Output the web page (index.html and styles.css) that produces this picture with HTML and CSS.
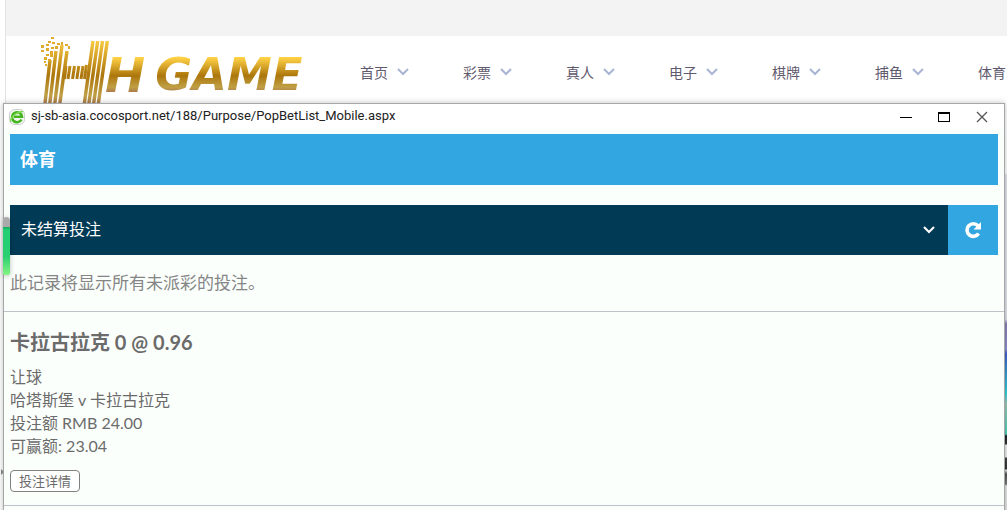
FILE: index.html
```html
<!DOCTYPE html>
<html lang="zh-CN">
<head>
    <meta charset="UTF-8">
    <title>HH GAME</title>
    <link rel="stylesheet" href="styles.css">
</head>
<body>
    <div class="site">
        <div class="topbar"></div>
        <header class="header">
            <a class="logo" href="#">
                <svg class="logo-mark" width="70" height="72" viewBox="0 0 70 72">
                    <defs>
                        <linearGradient id="gold" gradientUnits="userSpaceOnUse" x1="0" y1="2" x2="0" y2="70">
                            <stop offset="0" stop-color="#ffd145"/>
                            <stop offset="0.55" stop-color="#ac760c"/>
                            <stop offset="0.85" stop-color="#c0a045"/>
                            <stop offset="1" stop-color="#a8704e"/>
                        </linearGradient>
                    </defs>
                    <g stroke="url(#gold)" stroke-width="3.400" fill="none">
                        <path d="M10 24L4.700 70M16 15L9.500 70M22 9L14.500 70M27 15L19.500 70"/>
                        <path d="M53 5L44 70M57.700 5L48.500 70M62.500 5L53.300 70M67.300 5L58 70"/>
                    </g>
                    <g stroke="url(#gold)" stroke-width="3" fill="none">
                        <path d="M26 30L24.500 43M30 30L28 43M34.500 30L32.500 43M38.800 30L36.800 43M43 30L41 43M46.500 29L44.500 43"/>
                    </g>
                    <g fill="#e0aa2c">
                        <path d="M11 1h3v2h-3zM8 5h3v2h-3zM1 9h3v3H1zM6 8h3v2H6zM12 6h3v2h-3zM17 7h3v2h-3zM6 12h3v3H6zM11 11h3v2h-3zM1 14h3v2H1zM15 10h3v3h-3zM21 6h2v3h-2zM25 8h3v2h-3zM28 10h2v3h-2zM10 15h3v3h-3zM6 18h3v2H6zM10 18h3v3h-3zM4 21h3v3H4zM8 23h3v2H8zM4 25h2v2H4zM5 28h2v2H5z"/>
                    </g>
                </svg>
                <span class="logo-h">H</span>
                <span class="logo-game">GAME</span>
            </a>
            <nav class="nav">
                <a href="#">首页 <svg class="arrow" viewBox="0 0 12 8"><path d="M1 1l5 5 5-5"/></svg></a>
                <a href="#">彩票 <svg class="arrow" viewBox="0 0 12 8"><path d="M1 1l5 5 5-5"/></svg></a>
                <a href="#">真人 <svg class="arrow" viewBox="0 0 12 8"><path d="M1 1l5 5 5-5"/></svg></a>
                <a href="#">电子 <svg class="arrow" viewBox="0 0 12 8"><path d="M1 1l5 5 5-5"/></svg></a>
                <a href="#">棋牌 <svg class="arrow" viewBox="0 0 12 8"><path d="M1 1l5 5 5-5"/></svg></a>
                <a href="#">捕鱼 <svg class="arrow" viewBox="0 0 12 8"><path d="M1 1l5 5 5-5"/></svg></a>
                <a href="#">体育 <svg class="arrow" viewBox="0 0 12 8"><path d="M1 1l5 5 5-5"/></svg></a>
            </nav>
        </header>
    </div>
    <div class="side-banner"></div>
    <div class="side-arrow"></div>

    <!-- popup window -->
    <div class="window">
        <div class="titlebar">
            <svg class="browser-icon" width="16" height="16" viewBox="0 0 16 16">
                <rect x="0.500" y="0.500" width="15" height="15" rx="5" fill="#f4f6f4" stroke="#c9cfc9"/>
                <path d="M12.500 10.500A5 5 0 1 1 13 7.800H5" fill="none" stroke="#45b51f" stroke-width="2.600"/>
                <path d="M2 13C0 9 8 2.500 14 2.500" fill="none" stroke="#7ed957" stroke-width="1.300"/>
            </svg>
            <span class="url">sj-sb-asia.cocosport.net/188/Purpose/PopBetList_Mobile.aspx</span>
            <div class="window-buttons">
                <button type="button" aria-label="Minimize"><svg width="12" height="12" viewBox="0 0 12 12"><path d="M0 6.500h12" stroke="#000"/></svg></button>
                <button type="button" aria-label="Maximize"><svg width="12" height="12" viewBox="0 0 12 12"><path d="M0 1h12v10H0z" fill="#000"/><path d="M1 3h10v7H1z" fill="#fff"/></svg></button>
                <button type="button" aria-label="Close"><svg width="12" height="12" viewBox="0 0 12 12"><path d="M1 1l10 10M11 1L1 11" stroke="#555" stroke-width="1.300"/></svg></button>
            </div>
        </div>
        <main class="page">
            <h1 class="page-title">体育</h1>
            <div class="filter">
                <div class="select-box">
                    <select aria-label="投注状态">
                        <option>未结算投注</option>
                    </select>
                    <svg class="select-arrow" width="12" height="8" viewBox="0 0 12 8"><path d="M1 1l5 5 5-5"/></svg>
                </div>
                <button type="button" class="refresh" aria-label="刷新">
                    <svg width="18" height="18" viewBox="0 0 18 18">
                        <path d="M14.600 12.500A6.300 6.300 0 1 1 14 4.800" fill="none" stroke="#fff" stroke-width="3.600"/>
                        <path d="M17 1v7.500H9.500z" fill="#fff"/>
                    </svg>
                </button>
            </div>
            <p class="note">此记录将显示所有未派彩的投注。</p>
            <section class="bet">
                <h2>卡拉古拉克 0 @ 0.96</h2>
                <p>让球</p>
                <p>哈塔斯堡 v 卡拉古拉克</p>
                <p>投注额 RMB 24.00</p>
                <p>可赢额: 23.04</p>
                <button type="button" class="detail-btn">投注详情</button>
            </section>
        </main>
    </div>
    <div class="float-meter"></div>
</body>
</html>
```

FILE: styles.css
```css
* {
    box-sizing: border-box;
}
body {
    margin: 0;
    height: 100vh;
    position: relative;
    overflow: hidden;
    background: #fff;
    font-family: Lato, "Noto Sans CJK SC", sans-serif;
}
h1, h2, p {
    margin: 0;
}
button {
    padding: 0;
    border: none;
    font-family: inherit;
    cursor: pointer;
}

/* site behind the popup */
.site {
    margin-left: 5px;
    height: 100%;
    border-left: 1px solid #e3e3e3;
}
.topbar {
    height: 36px;
    background: #f3f3f3;
}
.header {
    display: flex;
    padding-left: 34px;
}
.logo {
    flex: none;
    display: flex;
    width: 320px;
    text-decoration: none;
    font-family: "DejaVu Sans", sans-serif;
    font-weight: bold;
    font-style: italic;
}
.logo-mark {
    flex: none;
}
.logo-h, .logo-game {
    height: 38px;
    margin-top: 20px;
    line-height: 38px;
    color: transparent;
    background: linear-gradient(#ffd145 5%, #ac760c 52%, #c0a045 82%, #a8704e 98%);
    background-clip: text;
    -webkit-background-clip: text;
}
.logo-h {
    margin-left: -5px;
    font-size: 48px;
}
.logo-game {
    margin-left: 10px;
    font-size: 45px;
}
.nav {
    display: flex;
    gap: 54px;
    height: 72px;
    align-items: center;
}
.nav a {
    flex: none;
    display: flex;
    align-items: center;
    gap: 9px;
    color: #5f5a6e;
    font-size: 14px;
    text-decoration: none;
}
.arrow {
    width: 12px;
    height: 8px;
    fill: none;
    stroke: #a9b5d3;
    stroke-width: 2;
}
.side-banner {
    position: absolute;
    top: 174px;
    right: 0;
    bottom: 0;
    width: 3px;
    background: linear-gradient(#dfe3ea 145px, #8c7fb5 150px, #8c8fd0 175px, #3f62cf 180px, #30d5dc 220px, #9dc8b8 230px, #50d0bc 260px, #222 262px, #333 270px, #eee 271px, #eee 283px, #444 284px, #333 295px, #eee 296px, #555 300px, #777 310px, #e5e5e5 312px);
}
.side-arrow {
    position: absolute;
    top: 469px;
    left: 1px;
    border: 3px solid transparent;
    border-left-color: #888;
}

/* popup */
.window {
    position: absolute;
    top: 103px;
    left: 3px;
    right: 2px;
    bottom: -4px;
    border: 1px solid #a5a8a8;
    background: #fbfffc;
    box-shadow: 0 0 6px rgba(0, 0, 0, 0.25);
}
.titlebar {
    display: flex;
    align-items: center;
    height: 25px;
    padding: 0 3px 0 5px;
    background: #fff;
}
.url {
    margin: 0 auto 2px 6px;
    color: #222;
    font-family: Roboto, sans-serif;
    font-size: 13px;
}
.window-buttons {
    display: flex;
}
.window-buttons button {
    display: flex;
    justify-content: center;
    width: 38px;
    background: none;
}
.page {
    padding-top: 5px;
}
.page-title {
    margin: 0 6px 20px;
    padding: 0 10px;
    height: 51px;
    line-height: 51px;
    color: #fff;
    background: #32a6e0;
    font-size: 18px;
}
.filter {
    display: flex;
    height: 50px;
    margin: 0 6px;
}
.select-box {
    flex: 1;
    display: grid;
    align-items: center;
    background: #003a55;
}
.select-box select, .select-arrow {
    grid-area: 1 / 1;
}
.select-box select {
    width: 100%;
    height: 50px;
    padding: 0 11px 4px;
    border: none;
    appearance: none;
    color: #fff;
    background: transparent;
    font-family: inherit;
    font-size: 16px;
}
.select-arrow {
    justify-self: end;
    margin-right: 13px;
    pointer-events: none;
    fill: none;
    stroke: #fff;
    stroke-width: 2;
}
.refresh {
    display: flex;
    align-items: center;
    justify-content: center;
    width: 50px;
    background: #32a6e0;
}
.note {
    padding: 0 6px;
    line-height: 56px;
    color: #858585;
    font-size: 17px;
    border-bottom: 1px solid #bfc0c8;
}
.bet {
    padding: 14px 6px 13px;
    color: #6b6b6b;
    border-bottom: 1px solid #bfc0c8;
}
.bet h2 {
    margin-bottom: 7px;
    line-height: 32px;
    font-size: 20px;
}
.bet p {
    line-height: 23px;
    font-size: 16px;
}
.detail-btn {
    display: block;
    margin-top: 13px;
    padding: 0 8px;
    height: 22px;
    line-height: 20px;
    border: 1px solid #808080;
    border-radius: 4px;
    color: #6b6b6b;
    background: #fff;
    font-size: 13px;
}
.float-meter {
    position: absolute;
    top: 217px;
    left: 3px;
    width: 7px;
    height: 58px;
    border-radius: 4px 4px 2px 2px;
    background: linear-gradient(#aaa 10px, #15a85a 10px, #22cf74 13px, #2bd070 40px, #86f584);
    box-shadow: 0 1px 5px rgba(0, 0, 0, 0.25);
}
```
